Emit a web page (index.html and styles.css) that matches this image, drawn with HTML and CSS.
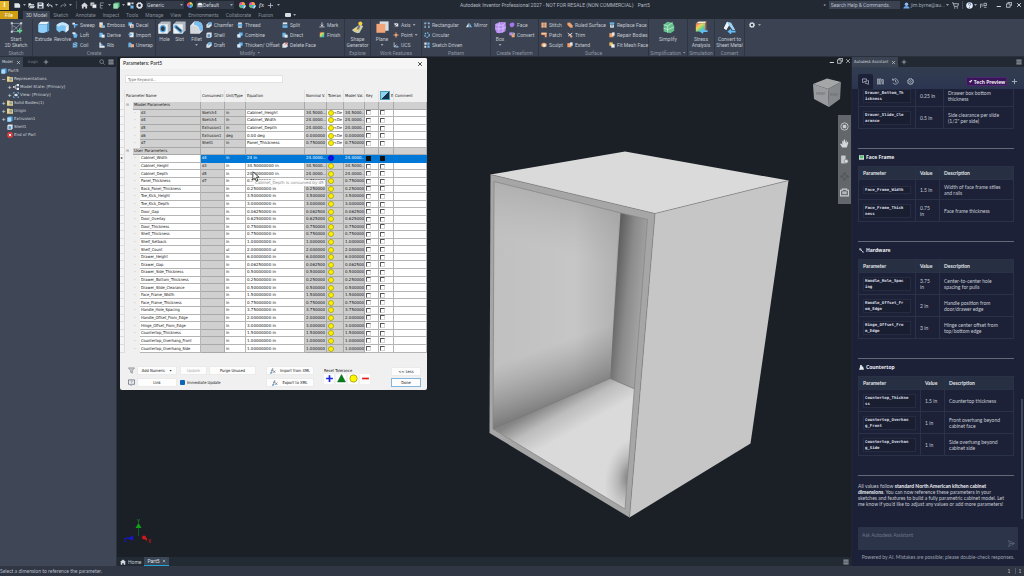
FILE: index.html
```html
<!DOCTYPE html>
<html lang="en">
<head>
<meta charset="utf-8">
<title>Autodesk Inventor Professional 2027 - Part5</title>
<link rel="stylesheet" href="styles.css">
</head>
<body>
<svg class="defs" aria-hidden="true">
  <defs>
    <linearGradient id="rainbow" x1="0" y1="0" x2="1" y2="1"><stop offset="0" stop-color="#f0605a"/><stop offset=".35" stop-color="#f4d35a"/><stop offset=".65" stop-color="#58d48c"/><stop offset="1" stop-color="#4a9ff0"/></linearGradient>
  </defs>
  <symbol id="new" viewBox="0 0 16 16"><path d="M1 3h10l3 3v7H1z" fill="#e3e6ea"/></symbol>
  <symbol id="open" viewBox="0 0 16 16"><path d="M1 3h5l2 2h6v3H4l-3 5z" fill="#e3e6ea"/><path d="M5 9h11l-3 5H2z" fill="#c4c9d0"/></symbol>
  <symbol id="save" viewBox="0 0 16 16"><path d="M1 1h12l2 2v12H1z" fill="#e3e6ea"/><path d="M4 3h7v3H4zM4 9h8v5H4z" fill="#4c5564"/></symbol>
  <symbol id="undo" viewBox="0 0 16 16"><path d="M3 7h7q4 0 4 5M6 3 2 7l4 4" fill="none" stroke="#e3e6ea" stroke-width="2.2"/></symbol>
  <symbol id="redo" viewBox="0 0 16 16"><path d="M13 7H6q-4 0-4 5M10 3l4 4-4 4" fill="none" stroke="#78808c" stroke-width="2.2"/></symbol>
  <symbol id="home" viewBox="0 0 16 16"><path d="M8 1 0 8h2v7h4v-4h4v4h4V8h2z" fill="#d5d9de"/></symbol>
  <symbol id="stack" viewBox="0 0 16 16"><path d="M1 1h9v8H1z" fill="#c8ccd2"/><path d="M5 5h10v9H5z" fill="#eceef0" stroke="#222933"/></symbol>
  <symbol id="select" viewBox="0 0 16 16"><path d="M3 2h8M3 2v12M3 8h6M3 14h5" stroke="#89919d" stroke-width="2" fill="none"/></symbol>
  <symbol id="cubeg" viewBox="0 0 16 16"><path d="M1 4 5 1h10v10l-4 4H1z" fill="#55b980"/><path d="M1 4h10v11H1z" fill="#9be0b5"/></symbol>
  <symbol id="link" viewBox="0 0 16 16"><path d="M1 1h7v7H1z" fill="#fff"/><path d="M8 8h7v7H8z" fill="#6bb9ee"/><path d="M10 1h5v4h-5z" fill="#ccd"/></symbol>
  <symbol id="gear" viewBox="0 0 16 16"><circle cx="8" cy="8" r="5" fill="none" stroke="#dfe2e6" stroke-width="3.5"/><circle cx="8" cy="8" r="7" fill="none" stroke="#dfe2e6" stroke-width="2" stroke-dasharray="2.8 2.7"/></symbol>
  <symbol id="gearline" viewBox="0 0 16 16"><circle cx="8" cy="8" r="6" fill="none" stroke="#b7bdc8" stroke-width="2"/><circle cx="8" cy="8" r="2" fill="none" stroke="#b7bdc8" stroke-width="1.5"/><circle cx="8" cy="8" r="7.3" fill="none" stroke="#b7bdc8" stroke-width="1.4" stroke-dasharray="2.9 2.8"/></symbol>
  <symbol id="wheel" viewBox="0 0 16 16"><path d="M8 8V0a8 8 0 0 1 7 4z" fill="#f4d35a"/><path d="M8 8l7-4a8 8 0 0 1 0 8z" fill="#6fd06a"/><path d="M8 8l7 4a8 8 0 0 1-7 4z" fill="#46b0f0"/><path d="M8 8v8a8 8 0 0 1-7-4z" fill="#5b6fe8"/><path d="M8 8l-7 4a8 8 0 0 1 0-8z" fill="#e25bb0"/><path d="M8 8 1 4a8 8 0 0 1 7-4z" fill="#f0653c"/></symbol>
  <symbol id="material" viewBox="0 0 16 16"><path d="M1 9a7 7 0 0 1 14 0z" fill="#f0f0f0"/><path d="M1 10h14v4H1z" fill="#aab0b8"/></symbol>
  <symbol id="plus" viewBox="0 0 16 16"><path d="M8 2v12M2 8h12" stroke="#aeb4bf" stroke-width="2"/></symbol>
  <symbol id="paint" viewBox="0 0 16 16"><circle cx="7" cy="7" r="7" fill="#e25bb0"/><path d="M7 7V0a7 7 0 0 1 7 7z" fill="#f4a53a"/><path d="M7 7h7a7 7 0 0 1-7 7z" fill="#46b0f0"/><path d="M7 7v7a7 7 0 0 1-7-7z" fill="#53c46c"/><path d="m9 15 5-8 2 2-4 6z" fill="#e9edf2"/></symbol>
  <symbol id="user" viewBox="0 0 16 16"><circle cx="8" cy="5" r="4" fill="#8cbcf5"/><path d="M1 15q0-6 7-6t7 6z" fill="#6aa5ee"/></symbol>
  <symbol id="cart" viewBox="0 0 16 16"><path d="M0 2h3l2 8h8l2-6H4" fill="none" stroke="#b9bfc8" stroke-width="2"/><circle cx="6" cy="13.500" r="1.500" fill="#b9bfc8"/><circle cx="12" cy="13.500" r="1.500" fill="#b9bfc8"/></symbol>
  <symbol id="help" viewBox="0 0 16 16"><circle cx="8" cy="8" r="7.500" fill="#e8edf5"/><path d="M5.500 6q0-3 2.500-3t2.500 2.500Q10.500 7 8 9M8 11v2" fill="none" stroke="#2e5fa8" stroke-width="2"/></symbol>
  <symbol id="share" viewBox="0 0 16 16"><path d="M1 14V5h5M9 3h6v5h-6zM9 12h6M3 9h5" stroke="#c0c5cd" stroke-width="1.800" fill="none"/></symbol>
  <symbol id="minimize" viewBox="0 0 16 16"><path d="M2 12h11" stroke="#e3e6ea" stroke-width="2.500"/></symbol>
  <symbol id="restore" viewBox="0 0 16 16"><path d="M5 4V1h10v8h-3M1 5h10v9H1z" fill="none" stroke="#e3e6ea" stroke-width="2"/></symbol>
  <symbol id="close" viewBox="0 0 16 16"><path d="m3 3 10 10M13 3 3 13" stroke="currentColor" stroke-width="2"/></symbol>
  <symbol id="menu" viewBox="0 0 16 16"><path d="M1 3h14M1 8h14M1 13h14" stroke="#cdd1d8" stroke-width="2.200"/></symbol>
  <symbol id="search" viewBox="0 0 16 16"><circle cx="7" cy="7" r="5" fill="none" stroke="#a8adb7" stroke-width="1.500"/><path d="m11 11 4 4" stroke="#a8adb7" stroke-width="1.500"/></symbol>
  <symbol id="sketch" viewBox="0 0 32 32"><path d="M5 6h22v20H5zM5 26 27 6M5 12q14 2 14 14" fill="none" stroke="#aab1bd" stroke-width="1.500"/><g fill="#cfd4db"><path d="M2 3h5v5H2zM25 3h5v5h-5zM2 24h5v5H2z"/></g><path d="M24 18v12M18 24h12" stroke="#5fd58f" stroke-width="3.500"/></symbol>
  <symbol id="extrude" viewBox="0 0 32 32"><path d="m3 8 6-6h21l-5 6z" fill="#e8f2fa"/><path d="M25 8l5-6v21l-5 6z" fill="#4f9fd8"/><path d="M3 8h22v18q-11 7-22 1z" fill="#8fcffa"/></symbol>
  <symbol id="revolve" viewBox="0 0 32 32"><path d="M1 10Q16-4 31 10v12l-7 6q-8-8-16 0l-7-6z" fill="#7cc4f2"/><path d="M1 10Q16-4 31 10l-6 4q-9-7-18 0z" fill="#c8e6fa"/><path d="m24 16 7-6v12l-7 6z" fill="#e8eef2"/></symbol>
  <symbol id="hole" viewBox="0 0 32 32"><path d="m1 8 7-7h23v22l-7 8H1z" fill="#b4b9c0"/><path d="M1 8h23v23H1z" fill="#eef0f2"/><ellipse cx="12" cy="19" rx="8" ry="9" fill="#5eb0e8"/><ellipse cx="12" cy="19" rx="5" ry="6" fill="#313a48"/></symbol>
  <symbol id="slot" viewBox="0 0 32 32"><path d="m1 8 7-7h23v22l-7 8H1z" fill="#b4b9c0"/><path d="M1 8h23v23H1z" fill="#eef0f2"/><path d="m7 14 12 11" stroke="#5eb0e8" stroke-width="9" stroke-linecap="round"/><path d="m8 15 11 9" stroke="#313a48" stroke-width="4" stroke-linecap="round"/></symbol>
  <symbol id="fillet" viewBox="0 0 32 32"><path d="M1 11 10 1h10q11 2 11 14v9l-7 7H1z" fill="#e9ebee"/><path d="M10 1h10q11 2 11 14v8l-7 3q0-15-14-17z" fill="#78bff0"/><path d="M1 11h8q15 2 15 20H1z" fill="#d4d7da"/></symbol>
  <symbol id="generator" viewBox="0 0 32 32"><path d="M2 22 22 8l8 5-9 16q-9 4-19-7z" fill="#c9cdb6"/><path d="m5 21 13-7 8 3-10 9z" fill="#e8d372"/><path d="m14 21 4-11 5 1-3 10z" fill="#6f7884"/><circle cx="23" cy="6" r="5" fill="#f6cf3f"/></symbol>
  <symbol id="plane" viewBox="0 0 32 32"><path d="M9 1h22v23H9z" fill="#d9dde2"/><path d="M1 7h22v22H1z" fill="#f2a578"/></symbol>
  <symbol id="box" viewBox="0 0 32 32"><path d="M4 7q8-6 24-4 3 10 0 22-10 7-22 4Q0 18 4 7z" fill="#b48bf0"/><path d="M3 9q10 3 19 1M22 10q2 10-1 18M22 10l7-6M12 10v19M3 19q11 3 26-3M14 3l-2 7" fill="none" stroke="#e2d2ff" stroke-width="1.500"/></symbol>
  <symbol id="simplify" viewBox="0 0 32 32"><path d="m4 9 9-7 13 2 4 9v11l-9 6-17-4z" fill="#63bf8b"/><path d="m4 9 10 3 12-8M14 12v17M4 18l11 3 14-6" stroke="#c4eed4" stroke-width="2" fill="none"/></symbol>
  <symbol id="stress" viewBox="0 0 32 32"><path d="m2 6 7-5h19l-3 5z" fill="#f6eecb"/><path d="M2 6h23v20H2z" fill="url(#rainbow)"/><path d="m25 6 3-5v20l-3 5z" fill="#d35c57"/><path d="M14 25h17M20 20l-6 5 6 5" stroke="#61bdf4" stroke-width="4" fill="none"/></symbol>
  <symbol id="metal" viewBox="0 0 32 32"><path d="m2 18 8-16 10 2 10 18-6 1-9-12-7 11z" fill="#9ed2f5"/><path d="m2 18 8-16 4 9-6 11z" fill="#f0f4f7"/><path d="M14 26h17M20 21l-6 5 6 5" stroke="#61bdf4" stroke-width="4" fill="none"/></symbol>
  <symbol id="s-sweep" viewBox="0 0 16 16"><path d="M1 2h7v5H1z" fill="#e6eef5"/><path d="M5 5h10v4H9v6H5z" fill="#6bb8ec"/></symbol>
  <symbol id="s-loft" viewBox="0 0 16 16"><path d="M2 2h7l6 5-3 8H5z" fill="#6bb8ec"/><path d="M1 1h8v4H1z" fill="#eef3f7"/></symbol>
  <symbol id="s-coil" viewBox="0 0 16 16"><path d="M2 4q12-4 12 0L2 8q12-2 12 1L2 13h12" fill="none" stroke="#7cc4f2" stroke-width="2.500"/></symbol>
  <symbol id="s-emboss" viewBox="0 0 16 16"><path d="M1 1h9v13H1z" fill="#e6e9ec"/><path d="m4 6 11 5v4H4z" fill="#f0bd78"/><path d="M9 9h7v6H9z" fill="#6bb8ec"/></symbol>
  <symbol id="s-derive" viewBox="0 0 16 16"><path d="M1 2h9v12H1z" fill="#6bb8ec"/><path d="M7 7h8v8H7z" fill="#e8ebee"/></symbol>
  <symbol id="s-rib" viewBox="0 0 16 16"><path d="M1 1h4v9h10v5H1z" fill="#e3e6ea"/><path d="m5 3 8 7H5z" fill="#6bb8ec"/></symbol>
  <symbol id="s-decal" viewBox="0 0 16 16"><path d="M1 1h10v9H1z" fill="#6bb8ec"/><path d="M5 6h10v9H5z" fill="#e6e9ec"/><circle cx="10" cy="11" r="2.500" fill="#cf6e60"/></symbol>
  <symbol id="s-import" viewBox="0 0 16 16"><path d="M4 1h11v13H4z" fill="#e6e9ec"/><path d="M0 7h9M6 4l3 3-3 3" fill="none" stroke="#4fa8e8" stroke-width="2.500"/></symbol>
  <symbol id="s-unwrap" viewBox="0 0 16 16"><path d="M1 2q9-3 9 4v8H1z" fill="#6bb8ec"/><path d="M8 6h8v8H8z" fill="#f0a878"/></symbol>
  <symbol id="s-chamfer" viewBox="0 0 16 16"><path d="M1 7 7 1h8v8l-6 6H1z" fill="#dfe3e7"/><path d="m7 1 8 0v3L4 11z" fill="#5faee6"/></symbol>
  <symbol id="s-shell" viewBox="0 0 16 16"><path d="m1 4 3-3h11v11l-3 3H1z" fill="#e2e5e9"/><path d="M4 6h7v7H4z" fill="#4d92c8"/></symbol>
  <symbol id="s-thread" viewBox="0 0 16 16"><path d="M3 1h10v4H3zM3 11h10v4H3z" fill="#dfe3e7"/><path d="M2 5h12v6H2z" fill="#5faee6"/></symbol>
  <symbol id="s-combine" viewBox="0 0 16 16"><path d="M5 1h10v9h-5v5H1V6h4z" fill="#6bb8ec"/><path d="M1 6h8v8H1z" fill="#e2e8ee"/></symbol>
  <symbol id="s-split" viewBox="0 0 16 16"><path d="M2 1h12v5H2z" fill="#e2e5e9"/><path d="M2 9h12v6H2zM0 7h15" fill="#6bb8ec" stroke="#6bb8ec"/></symbol>
  <symbol id="s-delete" viewBox="0 0 16 16"><path d="m1 6 5-4h9v9l-4 4H1z" fill="#dfe3e7"/><path d="m8 1 6 6M14 1 8 7" stroke="#e25c50" stroke-width="2.500"/></symbol>
  <symbol id="s-mark" viewBox="0 0 16 16"><path d="M8 1v9M5 7l3 4 3-4M1 13h14" stroke="#e3e6ea" stroke-width="2" fill="none"/></symbol>
  <symbol id="s-finish" viewBox="0 0 16 16"><path d="M2 1h12v13H2z" fill="url(#rainbow)"/></symbol>
  <symbol id="s-axis" viewBox="0 0 16 16"><path d="M3 3h11v9H6z" fill="#e2e5e9"/><path d="M1 15 12 4" stroke="#5a6371" stroke-width="2"/></symbol>
  <symbol id="s-point" viewBox="0 0 16 16"><path d="M8 0v16M0 8h16" stroke="#d8a088" stroke-width="1.500"/><circle cx="8" cy="8" r="4" fill="#f2a36b"/></symbol>
  <symbol id="s-ucs" viewBox="0 0 16 16"><path d="M3 1v12h12M3 13l6-6" stroke="#cfd4db" stroke-width="2" fill="none"/><path d="M9 10h4v4H9z" fill="#6bb8ec"/></symbol>
  <symbol id="s-rect" viewBox="0 0 16 16"><g fill="#8dc8f0"><path d="M1 1h4v4H1zM11 1h4v4h-4zM1 11h4v4H1zM11 11h4v4h-4z"/></g><path d="M6 3h4M3 6v4M13 6v4" stroke="#dfe3e7"/></symbol>
  <symbol id="s-circ" viewBox="0 0 16 16"><circle cx="8" cy="8" r="6" fill="none" stroke="#7cc4f2" stroke-width="3" stroke-dasharray="4 2.300"/></symbol>
  <symbol id="s-driven" viewBox="0 0 16 16"><path d="M1 1h6v6H1zM1 10h5v5H1z" fill="#e2e5e9"/><path d="M9 1h6v6H9zM9 9h6v6H9z" fill="#6bb8ec"/></symbol>
  <symbol id="s-mirror" viewBox="0 0 16 16"><path d="M7 2v12H0z" fill="#e3e6ea"/><path d="M9 2v12h7z" fill="#6bb8ec"/></symbol>
  <symbol id="s-face" viewBox="0 0 16 16"><path d="M1 6q5-7 12-4 4 8-3 11-6 4-9-7z" fill="#a974f0"/></symbol>
  <symbol id="s-convert" viewBox="0 0 16 16"><path d="M1 1h8v8H1z" fill="#b890f2"/><path d="M7 6h8v8H7z" fill="#f0a878"/><path d="M9 3h5v4" stroke="#fff" fill="none" stroke-width="2"/></symbol>
  <symbol id="s-orange" viewBox="0 0 16 16"><path d="M1 2h14v12h-5V8H1z" fill="#f2a36b"/><path d="M1 2h14v3H1z" fill="#f8caa6"/></symbol>
  <symbol id="s-stitch" viewBox="0 0 16 16"><path d="M1 1h6v14H1zM9 1h6v14H9z" fill="#f2a36b"/><path d="M4 4h8M4 8h8M4 12h8" stroke="#e8ebee"/></symbol>
  <symbol id="s-sculpt" viewBox="0 0 16 16"><path d="M1 5q7-6 14 0v6q-7 6-14 0z" fill="#f2a36b"/><circle cx="9" cy="9" r="3.500" fill="#e5eef5"/></symbol>
  <symbol id="s-ruled" viewBox="0 0 16 16"><path d="m1 2 7-1 7 8v6H9L1 8z" fill="#f2a36b"/></symbol>
  <symbol id="s-trim" viewBox="0 0 16 16"><path d="m2 3 12 9M3 11 14 3" stroke="#e3e6ea" stroke-width="2.500"/><circle cx="11" cy="12" r="3" fill="#f2a36b"/></symbol>
  <symbol id="s-replace" viewBox="0 0 16 16"><path d="M2 1h12v5H2z" fill="#6bb8ec"/><path d="M3 7h10v8H3z" fill="#e2e5e9"/><path d="M6 4h4v8H6z" fill="#5597c9"/></symbol>
  <symbol id="s-repair" viewBox="0 0 16 16"><path d="M1 3h11v11H1z" fill="#f2a36b"/><path d="M8 1h7v9H8z" fill="#e2e5e9"/></symbol>
  <symbol id="s-mesh" viewBox="0 0 16 16"><path d="M1 1h9v9H1z" fill="#f0c35c"/><path d="M6 6h9v9H6z" fill="#eceef0"/></symbol>
  <symbol id="folder" viewBox="0 0 16 16"><path d="M0 1h6l2 2h8v12H0z" fill="#e9d28b"/><path d="M6 6h8v6H6z" fill="#8a9c9f"/></symbol>
  <symbol id="part" viewBox="0 0 16 16"><path d="m1 4 4-3h10v10l-4 4H1z" fill="#4f9fd8"/><path d="M1 4h10v11H1z" fill="#a8dafb"/></symbol>
  <symbol id="states" viewBox="0 0 16 16"><path d="M0 8h7M7 3v10h3M7 3h3" stroke="#e3e6ea" fill="none" stroke-width="1.500"/><path d="M10 0h6v6h-6zM10 10h6v6h-6zM0 6h4v4H0z" fill="#e3e6ea"/></symbol>
  <symbol id="view" viewBox="0 0 16 16"><path d="M1 5V1h4M11 1h4v4M15 11v4h-4M5 15H1v-4" fill="none" stroke="#6bb8ec" stroke-width="2"/><path d="M4 5h8v6H4z" fill="#cfe2f0"/></symbol>
  <symbol id="stop" viewBox="0 0 16 16"><circle cx="8" cy="8" r="8" fill="#d93636"/><path d="m5 5 6 6M11 5l-6 6" stroke="#fff" stroke-width="2.500"/></symbol>
  <symbol id="funnel" viewBox="0 0 16 16"><path d="M1 2h14L10 8v6l-4-2V8z" fill="#c9cbce" stroke="#85888d" stroke-width="1.600"/></symbol>
  <symbol id="tip" viewBox="0 0 16 16"><path d="M1 2h14v10H9l-2 3-2-3H1z" fill="none" stroke="#52606e" stroke-width="1.600"/><path d="M6 5h4L8 8v2" stroke="#52606e" fill="none"/></symbol>
  <symbol id="fx" viewBox="0 0 16 16"><path d="M9 2Q6 0 5.500 5L4 13q-1 2-3 1M3 6h6M9 7l5 6M14 7l-6 6" fill="none" stroke="#4b5865" stroke-width="1.600"/><path d="M0 13h6" stroke="#2b8fd8" stroke-width="2"/></symbol>
  <symbol id="chat" viewBox="0 0 16 16"><path d="M1 2h9v6H5L2 11V8H1zM12 6h3v6h-1v3l-3-3H7v-2" fill="none" stroke="#c9cedb" stroke-width="1.500"/></symbol>
  <symbol id="books" viewBox="0 0 16 16"><path d="M1 2h3v12H1zM6 2h3v12H6zM11 4l3-1 2 10-3 1z" fill="none" stroke="#b7bdc8" stroke-width="1.700"/></symbol>
  <symbol id="history" viewBox="0 0 16 16"><path d="M2 4q7-6 11 1t-4 9q-5 1-7-3M1 1v4h4M8 4v5h3" fill="none" stroke="#b7bdc8" stroke-width="1.600"/></symbol>
  <symbol id="spark" viewBox="0 0 16 16"><path d="m2 8 12-6-2 6H9l-3 7v-6z" fill="#fff"/></symbol>
  <symbol id="send" viewBox="0 0 16 16"><path d="m1 1 14 7-14 7 3-7zM4 8h10" fill="none" stroke="#626b80" stroke-width="1.500"/></symbol>
  <symbol id="frame" viewBox="0 0 16 16"><path d="M0 1h16v14H0z" fill="#e8f0ea"/><path d="M2 3h12v8H2z" fill="#4fbf6a"/></symbol>
  <symbol id="wrench" viewBox="0 0 16 16"><path d="m4 4 9 9" stroke="#d6d8dd" stroke-width="3"/><circle cx="4" cy="4" r="3" fill="none" stroke="#d6d8dd" stroke-width="2"/><circle cx="13" cy="13" r="2" fill="#d6d8dd"/></symbol>
  <symbol id="counter" viewBox="0 0 16 16"><path d="M4 0h5v5h4l3 10H0l3-8z" fill="#e8e9ed"/></symbol>
  <symbol id="orb" viewBox="0 0 16 16"><circle cx="8" cy="8" r="6.500" fill="none" stroke="#c8cacd" stroke-width="1.500"/><path d="M5 5h6v6H5z" fill="#c8cacd"/></symbol>
  <symbol id="hand" viewBox="0 0 16 16"><path d="M4 15 0 9l2-1 2 2V3h2v4l1-6h2v6l2-5 1 1-1 5 2-3 2 1-3 9z" fill="#d4d6d8"/></symbol>
  <symbol id="zoomdoc" viewBox="0 0 16 16"><path d="M2 1h8v14H2z" fill="#c8cacd"/><circle cx="11" cy="11" r="3.500" fill="#d9dadc" stroke="#6b7075"/></symbol>
  <symbol id="orbit" viewBox="0 0 16 16"><path d="m8 0 3 3H5zM8 16l3-3H5zM0 8l3-3v6zM16 8l-3-3v6z" fill="#4e5358"/><circle cx="8" cy="8" r="3.500" fill="none" stroke="#4e5358" stroke-width="1.500"/></symbol>
  <symbol id="camera" viewBox="0 0 16 16"><path d="M1 4h3V2h8v2h3v10H1z" fill="none" stroke="#cfd1d4" stroke-width="1.800"/><path d="M4 6h8v5H4z" fill="#b5b8bb"/></symbol>
</svg>

<header class="titlebar">
  <span class="logo">I</span>
  <nav class="quick" aria-label="Quick access">
    <button aria-label="New"><svg><use href="#new"/></svg></button><i class="caret"></i>
    <button aria-label="Open"><svg><use href="#open"/></svg></button>
    <button aria-label="Save"><svg><use href="#save"/></svg></button>
    <button aria-label="Undo"><svg><use href="#undo"/></svg></button><i class="caret"></i>
    <button aria-label="Redo"><svg><use href="#redo"/></svg></button><i class="caret"></i>
    <i class="sep"></i>
    <button aria-label="Home"><svg><use href="#home"/></svg></button>
    <button aria-label="Projects"><svg><use href="#stack"/></svg></button>
    <button aria-label="Select"><svg><use href="#select"/></svg></button><i class="caret"></i>
    <button aria-label="Update"><svg><use href="#cubeg"/></svg></button><i class="caret"></i>
    <button aria-label="Links"><svg><use href="#link"/></svg></button>
    <button aria-label="Settings"><svg><use href="#gear"/></svg></button>
  </nav>
  <span class="pick"><select aria-label="Material"><option>Generic</option></select><i class="caret"></i></span>
  <svg class="ic"><use href="#wheel"/></svg>
  <span class="pick"><svg class="ic"><use href="#material"/></svg><select aria-label="Appearance"><option>Default</option></select><i class="caret"></i></span>
  <nav class="quick after" aria-label="Appearance tools">
    <button aria-label="Adjust"><svg><use href="#paint"/></svg></button>
    <button aria-label="Clear"><svg><use href="#paint"/></svg></button>
    <button aria-label="Parameters" class="fxb">fx</button>
    <button aria-label="Add"><svg><use href="#plus"/></svg></button>
    <i class="caret"></i>
  </nav>
  <h1>Autodesk Inventor Professional 2027 - NOT FOR RESALE (NON COMMERCIAL) <span>Part5</span></h1>
  <div class="account">
    <span class="tri">▸</span>
    <input type="search" aria-label="Search" placeholder="Search Help &amp; Commands...">
    <button><svg><use href="#user"/></svg>jim.byrne@au...<i class="caret"></i></button>
    <button aria-label="Cart"><svg><use href="#cart"/></svg></button>
    <i class="sep"></i>
    <button aria-label="Help"><svg><use href="#help"/></svg><i class="caret"></i></button>
    <button aria-label="Share"><svg><use href="#share"/></svg></button>
  </div>
  <div class="winbtns">
    <button aria-label="Minimize"><svg><use href="#minimize"/></svg></button>
    <button aria-label="Restore"><svg><use href="#restore"/></svg></button>
    <button aria-label="Close"><svg><use href="#close"/></svg></button>
  </div>
</header>

<nav class="menu" aria-label="Ribbon tabs">
  <a class="file" href="#">File</a><a class="on" href="#">3D Model</a><a href="#">Sketch</a><a href="#">Annotate</a><a href="#">Inspect</a><a href="#">Tools</a><a href="#">Manage</a><a href="#">View</a><a href="#">Environments</a><a href="#">Collaborate</a><a href="#">Fusion</a>
  <button aria-label="Ribbon display"><span class="pill"></span><i class="caret"></i></button>
</nav>

<section class="ribbon" aria-label="Ribbon">
  <div class="group g-sketch">
    <div class="tools"><button class="big"><svg><use href="#sketch"/></svg><span>Start<br>2D Sketch</span></button></div>
    <div class="cap">Sketch</div>
  </div>
  <div class="group g-create">
    <div class="tools">
      <button class="big"><svg><use href="#extrude"/></svg><span>Extrude</span></button>
      <button class="big"><svg><use href="#revolve"/></svg><span>Revolve</span></button>
      <div class="col"><button><svg><use href="#s-sweep"/></svg>Sweep</button><button><svg><use href="#s-loft"/></svg>Loft</button><button><svg><use href="#s-coil"/></svg>Coil</button></div>
      <div class="col"><button><svg><use href="#s-emboss"/></svg>Emboss</button><button><svg><use href="#s-derive"/></svg>Derive</button><button><svg><use href="#s-rib"/></svg>Rib</button></div>
      <div class="col"><button><svg><use href="#s-decal"/></svg>Decal</button><button><svg><use href="#s-import"/></svg>Import</button><button><svg><use href="#s-unwrap"/></svg>Unwrap</button></div>
    </div>
    <div class="cap">Create</div>
  </div>
  <div class="group g-modify">
    <div class="tools">
      <button class="big"><svg><use href="#hole"/></svg><span>Hole</span></button>
      <button class="big"><svg><use href="#slot"/></svg><span>Slot</span></button>
      <button class="big"><svg><use href="#fillet"/></svg><span>Fillet</span><i class="caret"></i></button>
      <div class="col"><button><svg><use href="#s-chamfer"/></svg>Chamfer</button><button><svg><use href="#s-shell"/></svg>Shell</button><button><svg><use href="#s-chamfer"/></svg>Draft</button></div>
      <div class="col"><button><svg><use href="#s-thread"/></svg>Thread</button><button><svg><use href="#s-combine"/></svg>Combine</button><button><svg><use href="#s-combine"/></svg>Thicken/ Offset</button></div>
      <div class="col"><button><svg><use href="#s-split"/></svg>Split</button><button><svg><use href="#s-derive"/></svg>Direct</button><button><svg><use href="#s-delete"/></svg>Delete Face</button></div>
      <div class="col"><button><svg><use href="#s-mark"/></svg>Mark</button><button><svg><use href="#s-finish"/></svg>Finish</button></div>
    </div>
    <div class="cap">Modify <i class="caret"></i></div>
  </div>
  <div class="group g-explore">
    <div class="tools"><button class="big"><svg><use href="#generator"/></svg><span>Shape<br>Generator</span></button></div>
    <div class="cap">Explore</div>
  </div>
  <div class="group g-work">
    <div class="tools">
      <button class="big"><svg><use href="#plane"/></svg><span>Plane</span><i class="caret"></i></button>
      <div class="col"><button><svg><use href="#s-axis"/></svg>Axis <i class="caret"></i></button><button><svg><use href="#s-point"/></svg>Point <i class="caret"></i></button><button><svg><use href="#s-ucs"/></svg>UCS</button></div>
    </div>
    <div class="cap">Work Features</div>
  </div>
  <div class="group g-pattern">
    <div class="tools">
      <div class="col"><button><svg><use href="#s-rect"/></svg>Rectangular</button><button><svg><use href="#s-circ"/></svg>Circular</button><button><svg><use href="#s-driven"/></svg>Sketch Driven</button></div>
      <div class="col"><button><svg><use href="#s-mirror"/></svg>Mirror</button></div>
    </div>
    <div class="cap">Pattern</div>
  </div>
  <div class="group g-free">
    <div class="tools">
      <button class="big"><svg><use href="#box"/></svg><span>Box</span><i class="caret"></i></button>
      <div class="col"><button><svg><use href="#s-face"/></svg>Face</button><button><svg><use href="#s-convert"/></svg>Convert</button></div>
    </div>
    <div class="cap">Create Freeform</div>
  </div>
  <div class="group g-surface">
    <div class="tools">
      <div class="col"><button><svg><use href="#s-stitch"/></svg>Stitch</button><button><svg><use href="#s-orange"/></svg>Patch</button><button><svg><use href="#s-sculpt"/></svg>Sculpt</button></div>
      <div class="col"><button><svg><use href="#s-ruled"/></svg>Ruled Surface</button><button><svg><use href="#s-trim"/></svg>Trim</button><button><svg><use href="#s-repair"/></svg>Extend</button></div>
      <div class="col"><button><svg><use href="#s-replace"/></svg>Replace Face</button><button><svg><use href="#s-repair"/></svg>Repair Bodies</button><button><svg><use href="#s-mesh"/></svg>Fit Mesh Face</button></div>
    </div>
    <div class="cap">Surface</div>
  </div>
  <div class="group g-simplify">
    <div class="tools"><button class="big"><svg><use href="#simplify"/></svg><span>Simplify</span></button></div>
    <div class="cap">Simplification <i class="caret"></i></div>
  </div>
  <div class="group g-stress">
    <div class="tools"><button class="big"><svg><use href="#stress"/></svg><span>Stress<br>Analysis</span></button></div>
    <div class="cap">Simulation</div>
  </div>
  <div class="group g-convert">
    <div class="tools"><button class="big"><svg><use href="#metal"/></svg><span>Convert to<br>Sheet Metal</span></button></div>
    <div class="cap">Convert</div>
  </div>
  <button class="ribbon-gear" aria-label="Ribbon settings"><svg class="ic"><use href="#gear"/></svg><i class="caret"></i></button>
</section>

<main class="work">
  <aside class="browser">
    <div class="strip">
      <a class="tab on" href="#">Model <svg><use href="#close"/></svg></a>
      <a class="tab dim" href="#">iLogic</a>
      <button aria-label="Add tab"><svg class="ic"><use href="#plus"/></svg></button>
      <button class="end" aria-label="Search"><svg class="ic"><use href="#search"/></svg></button>
      <button aria-label="Menu"><svg class="ic"><use href="#menu"/></svg></button>
    </div>
    <ul class="tree">
      <li class="root"><svg><use href="#part"/></svg>Part5</li>
      <li><b>−</b><svg><use href="#folder"/></svg>Representations</li>
      <li class="sub"><b>+</b><svg><use href="#states"/></svg>Model State: [Primary]</li>
      <li class="sub"><b>+</b><svg><use href="#view"/></svg>View: [Primary]</li>
      <li><b>+</b><svg><use href="#folder"/></svg>Solid Bodies(1)</li>
      <li><b>+</b><svg><use href="#folder"/></svg>Origin</li>
      <li><b>+</b><svg><use href="#part"/></svg>Extrusion1</li>
      <li><b></b><svg><use href="#s-shell"/></svg>Shell1</li>
      <li><b></b><svg><use href="#stop"/></svg>End of Part</li>
    </ul>
  </aside>

  <section class="stage">
    <div class="viewport">
      <svg class="scene" viewBox="117 57 734 500" role="img" aria-label="Cabinet model">
        <defs>
          <linearGradient id="wall" x1="0" y1="0" x2="1" y2="0"><stop offset="0" stop-color="#c0c0c0"/><stop offset=".65" stop-color="#c6c6c6"/><stop offset="1" stop-color="#b0b0b0"/></linearGradient>
          <linearGradient id="wallLow" gradientUnits="userSpaceOnUse" x1="532" y1="352" x2="552" y2="408"><stop offset="0" stop-color="#888" stop-opacity="0"/><stop offset="1" stop-color="#686868" stop-opacity=".8"/></linearGradient>
          <linearGradient id="wallTop" gradientUnits="userSpaceOnUse" x1="550" y1="190" x2="535" y2="245"><stop offset="0" stop-color="#999" stop-opacity=".5"/><stop offset="1" stop-color="#aaa" stop-opacity="0"/></linearGradient>
          <linearGradient id="back" gradientUnits="userSpaceOnUse" x1="614" y1="290" x2="642" y2="293"><stop offset="0" stop-color="#606060"/><stop offset=".5" stop-color="#8b8b8b"/><stop offset="1" stop-color="#a2a2a2"/></linearGradient>
          <linearGradient id="floor" gradientUnits="userSpaceOnUse" x1="550" y1="402" x2="568" y2="434"><stop offset="0" stop-color="#858585"/><stop offset=".45" stop-color="#bdbdbd"/><stop offset="1" stop-color="#dadada"/></linearGradient>
          <radialGradient id="spot" gradientUnits="userSpaceOnUse" cx="0" cy="0" r="1" gradientTransform="translate(631 477) rotate(12) scale(26 40)"><stop offset="0" stop-color="#555" stop-opacity=".8"/><stop offset=".5" stop-color="#777" stop-opacity=".35"/><stop offset="1" stop-color="#999" stop-opacity="0"/></radialGradient>
          <clipPath id="opening"><path d="M494 181.500 647.500 219.500 625 509 493 429z"/></clipPath>
        </defs>
        <path d="M490.500 174.500 625 151.500 788.500 180.500 655 213.500z" fill="#dadada"/>
        <path d="M655 213.500 788.500 180.500 750.500 443.500 629.500 517.500z" fill="#c6c6c6"/>
        <path d="M490.500 174.500 655 213.500 629.500 517.500 489.500 433z" fill="#a6a6a6"/>
        <g clip-path="url(#opening)">
          <path d="M490 175h131L610 378.500 490 431z" fill="url(#wall)"/>
          <path d="M490 175h131L610 378.500 490 431z" fill="url(#wallLow)"/>
          <path d="M490 175h131L610 378.500 490 431z" fill="url(#wallTop)"/>
          <path d="M621 205 650 213 634 389 610 378.500z" fill="url(#back)"/>
          <path d="M610 378.500 636 389.500 628 512 488 431z" fill="url(#floor)"/>
          <path d="M610 378.500 636 389.500 628 512 488 431z" fill="url(#spot)"/>
          <path d="M610 378.500 492 429.500M610 378.500 636 389.500" stroke="#777" stroke-width=".7"/>
        </g>
        <path d="M494 181.500 647.500 219.500 625 509 493 429z" fill="none" stroke="#868686" stroke-width=".8"/>
        <path d="M490.500 174.500 655 213.500 788.500 180.500M655 213.500 629.500 517.500" fill="none" stroke="#888" stroke-width=".7"/>
        <g class="cube">
          <path d="M813 84 827 78.500 841 82 828 89z" fill="#a4a6a8"/>
          <path d="M813 84 828 89 829 107 814 99z" fill="#999b9e"/>
          <path d="M828 89 841 82 840 99 829 107z" fill="#85888b"/>
          <text x="816" y="95">FRONT</text><text x="830" y="96">RIGHT</text>
        </g>
        <g class="triad">
          <path d="M138.500 536V525" stroke="#0b6b20" stroke-width=".8"/>
          <path d="m138.500 523-3 5h6z" fill="#12a01c"/>
          <path d="m128 538.500 5-3v5z" fill="#1616d8"/><path d="M126 538h4" stroke="#1616d8"/>
          <path d="m147 541-5-4q4 0 5 1z" fill="#d01818"/><circle cx="144" cy="537.500" r="2" fill="#d01818"/>
          <text x="137" y="523" fill="#12a01c">Y</text><text x="148" y="543" fill="#d01818">X</text><text x="124" y="542" fill="#1616d8">Z</text>
        </g>
      </svg>
      <div class="docbtns">
        <button aria-label="Minimize document"><svg class="ic"><use href="#minimize"/></svg></button>
        <button aria-label="Restore document"><svg class="ic"><use href="#restore"/></svg></button>
        <button aria-label="Close document"><svg class="ic"><use href="#close"/></svg></button>
      </div>
      <div class="navbar" role="toolbar" aria-label="Navigation">
        <button aria-label="Wheel"><svg><use href="#orb"/></svg></button>
        <button aria-label="Pan"><svg><use href="#hand"/></svg></button>
        <button aria-label="Zoom"><svg><use href="#zoomdoc"/></svg></button>
        <button aria-label="Orbit"><svg><use href="#orbit"/></svg></button>
        <button aria-label="Look at"><svg><use href="#camera"/></svg></button>
      </div>

      <div class="dialog" role="dialog" aria-labelledby="dlg-title">
        <div class="dlg-head"><h2 id="dlg-title">Parameters: Part5</h2><button aria-label="Close dialog"><svg class="ic"><use href="#close"/></svg></button></div>
        <input class="filter" type="text" aria-label="Keyword" placeholder="Type Keyword...">
        <table class="params">
          <colgroup><col class="c-row"><col class="c-tree"><col class="c-ind"><col class="c-name"><col class="c-used"><col class="c-unit"><col class="c-eq"><col class="c-nom"><col class="c-tol"><col class="c-mod"><col class="c-key"><col class="c-exp"><col></colgroup>
          <thead><tr><th></th><th colspan="3">Parameter Name</th><th>Consumed I</th><th>Unit/Type</th><th>Equation</th><th>Nominal V.</th><th>Toleran</th><th>Model Val.</th><th>Key</th><th><span class="exp"></span>E</th><th>Comment</th></tr></thead>
          <tbody id="rows"></tbody>
        </table>
        <div class="dlg-foot">
          <div class="pair icons"><button class="bare" aria-label="Filter"><svg><use href="#funnel"/></svg></button><button class="bare" aria-label="Tips"><svg><use href="#tip"/></svg></button></div>
          <div class="pair add"><button>Add Numeric<i class="caret"></i></button><button>Link</button></div>
          <div class="mid">
            <div class="line"><button class="upd" disabled>Update</button><button class="purge">Purge Unused</button></div>
            <label class="line"><input type="checkbox" checked>Immediate Update</label>
          </div>
          <div class="pair xml"><button><svg><use href="#fx"/></svg>Import from XML</button><button><svg><use href="#fx"/></svg>Export to XML</button></div>
          <fieldset class="tol">
            <legend>Reset Tolerance</legend>
            <div class="line">
              <button aria-label="Upper"><svg viewBox="0 0 16 16"><path d="M8 2v12M2 8h12" stroke="#1a25e6" stroke-width="3"/></svg></button>
              <button aria-label="Median"><svg viewBox="0 0 16 16"><path d="m8 1 7 13H1z" fill="#0c7d14" stroke="#063"/></svg></button>
              <button aria-label="Nominal"><svg viewBox="0 0 16 16"><circle cx="8" cy="8" r="6.500" fill="#fff700" stroke="#77750c"/></svg></button>
              <button aria-label="Lower"><svg viewBox="0 0 16 16"><path d="M2 8h12" stroke="#e81818" stroke-width="3"/></svg></button>
            </div>
          </fieldset>
          <div class="pair ok"><button>&lt;&lt; Less</button><button class="done">Done</button></div>
        </div>
        <div class="hint">Cabinet_Depth is consumed by d5</div>
        <svg class="cursor" viewBox="0 0 10 14"><path d="M1 1v10l2.500-2.500L5.500 13l2-1-2-4H9z" fill="#fff" stroke="#222"/></svg>
      </div>
    </div>
    <nav class="docs" aria-label="Documents">
      <a href="#"><svg class="ic"><use href="#home"/></svg>Home</a>
      <a class="on" href="#">Part5 <svg><use href="#close"/></svg></a>
      <button aria-label="Documents menu"><svg class="ic"><use href="#menu"/></svg></button>
    </nav>
  </section>

  <aside class="assistant">
    <div class="strip">
      <a class="tab on" href="#">Autodesk Assistant <svg><use href="#close"/></svg></a>
      <button aria-label="Add tab"><svg class="ic"><use href="#plus"/></svg></button>
      <button class="end" aria-label="Menu"><svg class="ic"><use href="#menu"/></svg></button>
    </div>
    <div class="a-head">
      <button class="on" aria-label="Chat"><svg><use href="#chat"/></svg></button>
      <button aria-label="Library"><svg><use href="#books"/></svg></button>
      <button aria-label="History"><svg><use href="#history"/></svg></button>
      <button aria-label="Settings"><svg><use href="#gearline"/></svg></button>
      <button class="preview"><svg><use href="#spark"/></svg>Tech Preview</button>
      <button class="add" aria-label="New chat"><svg><use href="#plus"/></svg></button>
    </div>
    <div class="a-body">
      <table class="spec first">
        <tbody>
          <tr><td><code>Drawer_Bottom_Th<br>ickness</code></td><td>0.25 in</td><td>Drawer box bottom<br>thickness</td></tr>
          <tr><td><code>Drawer_Slide_Cle<br>arance</code></td><td>0.5 in</td><td>Side clearance per slide<br>(1/2" per side)</td></tr>
        </tbody>
      </table>
      <hr>
      <h3><svg><use href="#frame"/></svg>Face Frame</h3>
      <table class="spec">
        <thead><tr><th>Parameter</th><th>Value</th><th>Description</th></tr></thead>
        <tbody>
          <tr class="short"><td><code>Face_Frame_Width</code></td><td>1.5 in</td><td>Width of face frame stiles<br>and rails</td></tr>
          <tr><td><code>Face_Frame_Thick<br>ness</code></td><td>0.75<br>in</td><td>Face frame thickness</td></tr>
        </tbody>
      </table>
      <hr>
      <h3><svg><use href="#wrench"/></svg>Hardware</h3>
      <table class="spec">
        <thead><tr><th>Parameter</th><th>Value</th><th>Description</th></tr></thead>
        <tbody>
          <tr><td><code>Handle_Hole_Spac<br>ing</code></td><td>3.75<br>in</td><td>Center-to-center hole<br>spacing for pulls</td></tr>
          <tr><td><code>Handle_Offset_Fr<br>om_Edge</code></td><td>2 in</td><td>Handle position from<br>door/drawer edge</td></tr>
          <tr><td><code>Hinge_Offset_Fro<br>m_Edge</code></td><td>3 in</td><td>Hinge center offset from<br>top/bottom edge</td></tr>
        </tbody>
      </table>
      <hr>
      <h3><svg><use href="#counter"/></svg>Countertop</h3>
      <table class="spec wide">
        <thead><tr><th>Parameter</th><th>Value</th><th>Description</th></tr></thead>
        <tbody>
          <tr><td><code>Countertop_Thickne<br>ss</code></td><td>1.5 in</td><td>Countertop thickness</td></tr>
          <tr><td><code>Countertop_Overhan<br>g_Front</code></td><td>1 in</td><td>Front overhang beyond<br>cabinet face</td></tr>
          <tr><td><code>Countertop_Overhan<br>g_Side</code></td><td>1 in</td><td>Side overhang beyond<br>cabinet side</td></tr>
        </tbody>
      </table>
      <hr>
      <p>All values follow <strong>standard North American kitchen cabinet<br>dimensions</strong>. You can now reference these parameters in your<br>sketches and features to build a fully parametric cabinet model. Let<br>me know if you'd like to adjust any values or add more parameters!</p>
      <span class="thumb"></span>
    </div>
    <form class="ask">
      <div class="box"><textarea aria-label="Message" placeholder="Ask Autodesk Assistant"></textarea><button type="button" aria-label="Send"><svg><use href="#send"/></svg></button></div>
      <small>Powered by AI. Mistakes are possible; please double-check responses.</small>
    </form>
  </aside>
</main>

<footer class="status"><span>Select a dimension to reference the parameter.</span><span class="n">1</span><span class="n last">1</span></footer>
<script src="app.js"></script>
</body>
</html>
```
FILE: styles.css
```css
* { box-sizing: border-box; }
html, body { height: 100%; }
body {
  margin: 0;
  display: flex;
  flex-direction: column;
  overflow: hidden;
  background: #222933;
  color: #c3c7ce;
  font: 5px/6px Roboto, "Noto Sans", sans-serif;
}
.defs { position: absolute; width: 0; height: 0; }
button, input, select, textarea { font: inherit; color: inherit; border: 0; padding: 0; margin: 0; background: none; border-radius: 0; outline: 0; }
button { display: flex; align-items: center; white-space: nowrap; }
a { color: inherit; text-decoration: none; }
h1, h2, h3, p { margin: 0; font: inherit; }
.ic { width: 6px; height: 6px; flex: none; }
.caret { width: 3px; height: 2px; flex: none; background: #9aa0ab; clip-path: polygon(0 0, 100% 0, 50% 100%); }
.sep { width: 1px; height: 8px; flex: none; background: #454d5a; }

/* title bar */
.titlebar { display: flex; align-items: center; height: 11px; flex: none; padding-bottom: 1px; background: #222933; }
.logo { width: 9px; height: 9px; background: #e6b422; color: #fff; font-weight: 700; font-size: 7px; line-height: 9px; text-align: center; }
.quick { display: flex; align-items: center; gap: 2px; padding-left: 5px; }
.quick svg, .account svg { width: 7px; height: 7px; }
.quick .sep { margin: 0 2px; }
.fxb { font: italic 700 6px/7px "Liberation Serif", serif; }
.pick { display: flex; align-items: center; width: 38px; height: 8px; margin: 0 3px; padding: 0 1px; background: #343c4a; }
.pick select { flex: 1; min-width: 0; appearance: none; line-height: 8px; color: #d0d3d9; }
.quick.after { padding-left: 2px; gap: 3px; }
.titlebar h1 { margin-left: auto; margin-right: auto; padding-left: 6px; white-space: nowrap; color: #b4b9c1; }
.titlebar h1 span { padding-left: 3px; }
.account { display: flex; align-items: center; gap: 3px; color: #9fa6b1; }
.account input { width: 71px; height: 8px; padding-left: 2px; background: #3b4353; }
.account input::placeholder { color: #b9bec7; opacity: 1; }
.account button { gap: 1px; }
.tri { font-size: 4px; }
.winbtns { display: flex; gap: 4px; padding: 0 2px 0 9px; color: #fff; }
.winbtns svg { width: 6px; height: 6px; }

/* ribbon tabs */
.menu { display: flex; align-items: stretch; height: 8px; flex: none; color: #858d99; line-height: 9px; }
.menu a { padding: 0 4px 0 3px; }
.menu .file { width: 18px; margin-right: 5px; padding: 0; background: #cf9e12; color: #fff; text-align: center; }
.menu .on { padding: 0 3px; background: #3b4353; color: #c3c7ce; }
.menu button { gap: 2px; padding-left: 8px; }
.pill { width: 6px; height: 4px; border-radius: 1px; background: #d9dce1; }

/* ribbon */
.ribbon { display: flex; height: 38px; flex: none; background: #3b4353; border-bottom: 1px solid #2a313d; }
.group { display: flex; flex-direction: column; border-right: 1px solid #2f3643; }
.tools { flex: 1; display: grid; padding-top: 2px; }
.cap { height: 7px; display: flex; align-items: center; justify-content: center; gap: 2px; color: #8e95a1; white-space: nowrap; }
.big { flex-direction: column; justify-content: flex-start; line-height: 6px; text-align: center; }
.big svg { width: 13px; height: 13px; margin-bottom: 2px; }
.big .caret { margin-top: 2px; }
.col { display: grid; grid-template-rows: repeat(3, 6px); row-gap: 4px; padding-top: 1px; justify-items: start; }
.col button { gap: 2px; }
.col svg { width: 6px; height: 6px; }
.g-sketch { width: 33px; }
.g-create { width: 123px; }
.g-create .tools { grid-template-columns: 19px 19px 27px 29px 1fr; padding-left: 1px; }
.g-modify { width: 189px; }
.g-modify .tools { grid-template-columns: 15px 15px 19px 31px 45px 37px 1fr; padding-left: 1px; }
.g-explore { width: 26px; }
.g-work { width: 51px; }
.g-work .tools { grid-template-columns: 22px 1fr; }
.g-pattern { width: 69px; }
.g-pattern .tools { grid-template-columns: 42px 1fr; padding-left: 2px; }
.g-free { width: 48px; }
.g-free .tools { grid-template-columns: 18px 1fr; }
.g-surface { width: 110px; }
.g-surface .tools { grid-template-columns: 26px 42px 1fr; padding-left: 2px; }
.g-simplify { width: 39px; }
.g-stress { width: 27px; }
.g-convert { width: 30px; }
.ribbon-gear { height: 12px; gap: 3px; padding-left: 4px; }

/* work area */
.work { flex: 1; min-height: 0; display: flex; }
.strip { display: flex; align-items: center; gap: 4px; height: 10px; flex: none; padding-right: 2px; background: #222933; }
.strip .tab { display: flex; align-items: center; gap: 3px; height: 10px; padding: 0 2px; white-space: nowrap; }
.strip .tab svg { width: 5px; height: 5px; }
.strip .on { background: #3b4453; color: #d2d5db; }
.strip .dim { color: #7f8793; }
.strip .end { margin-left: auto; }
.browser { width: 117px; flex: none; background: #3f4757; border-right: 1px solid #2c3340; color: #d0d3d9; font-family: "DejaVu Sans", sans-serif; font-size: 4px; }
.browser .strip { gap: 3px; font-family: "DejaVu Sans Condensed", "DejaVu Sans", sans-serif; }
.tree { margin: 0; padding: 0; list-style: none; }
.tree li { display: flex; align-items: center; gap: 1px; height: 8px; padding-left: 1px; }
.tree svg { width: 6px; height: 6px; }
.tree b { width: 5px; height: 5px; line-height: 5px; text-align: center; font-size: 5px; }
.tree .sub { padding-left: 7px; }
.stage { flex: 1; min-width: 0; display: flex; flex-direction: column; }
.viewport { flex: 1; min-height: 0; position: relative; background: #1b2027; }
.scene { position: absolute; inset: 0; width: 100%; height: 100%; }
.cube text { font-size: 3px; fill: #66696d; }
.triad text { font-size: 5px; }
.docbtns { position: absolute; top: 1px; right: 0; display: flex; gap: 2px; }
.navbar { position: absolute; top: 58px; right: 0; display: flex; flex-direction: column; align-items: center; justify-content: space-between; width: 13px; height: 89px; padding: 7px 0; background: #63676c; }
.navbar svg { width: 9px; height: 9px; }
.docs { display: flex; align-items: stretch; height: 9px; flex: none; padding-left: 3px; background: #222a34; }
.docs a { display: flex; align-items: center; gap: 2px; padding-right: 3px; }
.docs a svg:not(.ic) { width: 4px; height: 4px; }
.docs .on { padding: 0 3px; background: #3b4656; border-bottom: 1px solid #21a5d3; color: #dde0e5; }
.docs button { margin-left: auto; padding-right: 2px; }

/* parameters dialog */
.dialog {
  position: absolute; left: 3px; top: 1px; width: 307px;
  display: flex; flex-direction: column;
  background: #f0f0f0; border-radius: 2px; color: #111;
  font: 4px/5px "DejaVu Sans Condensed", "DejaVu Sans", sans-serif;
}
.dlg-head { display: flex; align-items: center; justify-content: space-between; height: 11px; padding: 0 4px 0 3px; background: #f6f6f6; border-radius: 2px 2px 0 0; }
.dlg-head h2 { font-size: 5px; font-family: Lato, sans-serif; }
.filter { width: 158px; height: 8px; margin: 6px 0 7px 5px; padding: 0 2px; background: #fff; border: 1px solid #e2e2e2; }
.filter::placeholder { color: #6a6a6a; opacity: 1; }
.params { width: 100%; height: 263px; table-layout: fixed; border-collapse: separate; border-spacing: 0; }
.c-row { width: 5px; } .c-tree { width: 8px; } .c-ind { width: 7px; } .c-name { width: 61px; }
.c-used { width: 24px; } .c-unit { width: 21px; } .c-eq { width: 59px; } .c-nom { width: 22px; }
.c-tol { width: 17px; } .c-mod { width: 21px; } .c-key { width: 14px; } .c-exp { width: 15px; }
.params th, .params td { padding: 0 0 0 1px; font-weight: 400; line-height: 6px; text-align: left; overflow: hidden; white-space: nowrap; }
.params thead tr { height: 12px; }
.params tbody tr { height: 7px; }
.params thead th { padding-bottom: 1px; border-right: 1px solid #e3e3e3; }
.params tbody td, .params tbody th { border-right: 1px solid #b5b5b5; border-bottom: 1px solid #b5b5b5; background: #fff; }
.params .num { font-family: "DejaVu Sans", sans-serif; }
.params tbody .edge { background: #f4f4f4; border-color: #dcdcdc; }
.params tbody .lead { background: #f0f0f0; border-color: transparent; color: #888; }
.params tbody .g, .params .group-row th, .params .group-row td:not(.edge):not(.lead) { background: #d0d0d0; border-color: #a9a9a9; }
.params .group-row th { font-family: "DejaVu Sans", sans-serif; }
.params .picked td:not(.edge):not(.lead):not(.nm) { background: #0078d7; border-color: #0078d7; color: #fff; }
.exp { display: inline-block; width: 10px; height: 9px; margin-right: 1px; vertical-align: middle; background: linear-gradient(135deg, #8fd3ea 50%, #17324d 50%); border: 1px solid #4a9cb5; }
.dot { display: inline-block; width: 6px; height: 6px; vertical-align: top; border-radius: 3px; background: #fff200; border: 1px solid #b3ab1b; }
.picked .dot { background: #0a10f0; border-color: #0a10c0; }
.params input { display: block; appearance: none; width: 5px; height: 5px; background: #fff; border: 1px solid #d8d8d8; border-top-color: #555; border-left-color: #555; }
.params .picked input { background: #111; border-color: #111; }
.dlg-foot { display: flex; align-items: flex-start; padding: 13px 6px 3px 5px; }
.dlg-foot button { justify-content: center; height: 9px; background: #fdfdfd; border: 1px solid #ebebeb; }
.dlg-foot .bare { background: none; border: 0; }
.pair, .mid { display: grid; row-gap: 3px; }
.line { display: flex; align-items: center; gap: 3px; height: 9px; }
.icons { width: 12px; }
.icons svg { width: 7px; height: 7px; }
.add { width: 40px; margin-right: 3px; }
.add button { gap: 4px; }
.dlg-foot .caret { background: #333; }
.dlg-foot .upd { width: 27px; color: #a9a9a9; }
.purge { width: 47px; }
.mid input { appearance: none; width: 5px; height: 5px; background: #0a66b5; clip-path: inset(0 round 1px); }
.mid .line { gap: 2px; }
.xml { width: 48px; margin: 0 10px; }
.xml button { gap: 4px; }
.xml svg { width: 6px; height: 6px; }
.tol { margin: 2px auto 0 0; padding: 0; border: 0; min-width: 0; }
.tol legend { padding: 0; }
.tol .line { gap: 2px; height: 11px; }
.tol button { width: 10px; height: 10px; border: 0; }
.tol svg { width: 9px; height: 9px; }
.ok { width: 30px; padding-top: 1px; row-gap: 2px; }
.dlg-foot .done { border-color: #7fb6df; }
.hint { position: absolute; left: 134px; top: 122px; padding: 0 1px; background: rgba(255, 255, 255, .92); color: #8c8c8c; line-height: 6px; font-family: "DejaVu Sans", sans-serif; }
.cursor { position: absolute; left: 132px; top: 113px; width: 8px; height: 11px; }

/* assistant */
.assistant { width: 173px; flex: none; display: flex; flex-direction: column; background: #1c2137; font-family: Lato, "Noto Sans", sans-serif; border-left: 1px solid #20262f; }
.assistant .strip { font: 4px/6px "DejaVu Sans Condensed", "DejaVu Sans", sans-serif; gap: 3px; }
.a-head { display: flex; align-items: flex-end; height: 22px; flex: none; padding: 0 6px; background: linear-gradient(#333d50, #2b3550); }
.a-head button { width: 15px; height: 15px; justify-content: center; }
.a-head .on { background: #1c2137; border-radius: 2px 2px 0 0; }
.a-head svg { width: 7px; height: 7px; }
.a-head .preview { width: 41px; height: 9px; margin: 0 3px 3px auto; gap: 1px; background: #3a1458; border: 1px solid #4d2770; border-radius: 1px; color: #fff; font: 600 5px/6px "Noto Sans", sans-serif; }
.a-head .preview svg { width: 5px; height: 5px; }
.a-head .add { width: 8px; margin: 0; }
.a-body { position: relative; flex: 1; min-height: 0; overflow: hidden; padding: 0 10px 0 6px; line-height: 6px; color: #c8ccd6; }
.spec { width: 100%; table-layout: fixed; border-collapse: collapse; border: 1px solid #2a3248; }
.spec.first { margin-top: -5px; }
.spec tr { height: 22px; }
.spec thead tr { height: 13px; background: #273042; }
.spec .short { height: 20px; }
.spec th, .spec td { padding: 0 4px; border: 1px solid #2a3248; text-align: left; font-weight: 400; white-space: nowrap; width: 24px; }
.spec.first td { width: 28px; }
.spec th { color: #e2e4ea; font-weight: 700; }
.spec th:first-child, .spec td:first-child, .spec.first td:first-child { width: 57px; }
.spec.wide th:first-child, .spec.wide td:first-child { width: 62px; }
.spec th:last-child, .spec td:last-child, .spec.first td:last-child { width: auto; }
.spec code { display: block; padding: 0 1px; border: 1px solid #262c42; background: #1a1e31; color: #dcdfe7; font: 700 4px/6px "DejaVu Sans Mono", monospace; }
.a-body hr { height: 1px; margin: 19px 0 5px; border: 0; background: #626878; }
.a-body h3 { display: flex; align-items: center; gap: 2px; height: 6px; margin-bottom: 6px; color: #eceef2; font: 700 5px/6px "Noto Sans", sans-serif; }
.a-body h3 svg { width: 5px; height: 5px; margin-left: 1px; }
.a-body p { padding-top: 2px; white-space: nowrap; }
.a-body strong { color: #eef0f4; }
.thumb { position: absolute; right: 1px; bottom: 0; width: 2px; height: 120px; background: #3d485e; }
.ask { flex: none; margin: 0; padding: 8px 6px 6px; display: grid; row-gap: 4px; text-align: center; }
.ask .box { display: flex; align-items: flex-end; height: 23px; padding: 5px 3px 3px 4px; background: #2c344a; border-radius: 1px; }
.ask textarea { flex: 1; height: 100%; resize: none; overflow: hidden; }
.ask textarea::placeholder { color: #6c7488; opacity: 1; }
.ask svg { width: 7px; height: 7px; }
.ask small { font-size: 5px; line-height: 6px; color: #9ba1af; }

/* status bar */
.status { display: flex; align-items: center; height: 10px; flex: none; background: #303644; color: #b9bdc5; font-family: Lato, sans-serif; }
.status .n { width: 12px; text-align: center; }
.status .n:nth-child(2) { margin-left: auto; }
.status .last { width: 9px; border-left: 1px solid #555d6b; }
```
FILE: app.js
```js
const model = [
  ["d3", "Sketch4", "in", "Cabinet_Height", "34.5000..."],
  ["d4", "Sketch4", "in", "Cabinet_Width", "24.0000..."],
  ["d5", "Extrusion1", "in", "Cabinet_Depth", "24.0000..."],
  ["d6", "Extrusion1", "deg", "0.00 deg", "0.000000"],
  ["d7", "Shell1", "in", "Panel_Thickness", "0.750000"]
];
const user = [
  ["Cabinet_Width", "d4", "in", "24 in", "24.0000..."],
  ["Cabinet_Height", "d3", "in", "34.50000000 in", "34.5000..."],
  ["Cabinet_Depth", "d5", "in", "24.00000000 in", "24.0000..."],
  ["Panel_Thickness", "d7", "in", "0.75000000 in", "0.750000"],
  ["Back_Panel_Thickness", "", "in", "0.25000000 in", "0.250000"],
  ["Toe_Kick_Height", "", "in", "3.50000000 in", "3.500000"],
  ["Toe_Kick_Depth", "", "in", "3.00000000 in", "3.000000"],
  ["Door_Gap", "", "in", "0.06250000 in", "0.062500"],
  ["Door_Overlay", "", "in", "0.62500000 in", "0.625000"],
  ["Door_Thickness", "", "in", "0.75000000 in", "0.750000"],
  ["Shelf_Thickness", "", "in", "0.75000000 in", "0.750000"],
  ["Shelf_Setback", "", "in", "1.00000000 in", "1.000000"],
  ["Shelf_Count", "", "ul", "2.00000000 ul", "2.000000"],
  ["Drawer_Height", "", "in", "6.00000000 in", "6.000000"],
  ["Drawer_Gap", "", "in", "0.06250000 in", "0.062500"],
  ["Drawer_Side_Thickness", "", "in", "0.50000000 in", "0.500000"],
  ["Drawer_Bottom_Thickness", "", "in", "0.25000000 in", "0.250000"],
  ["Drawer_Slide_Clearance", "", "in", "0.50000000 in", "0.500000"],
  ["Face_Frame_Width", "", "in", "1.50000000 in", "1.500000"],
  ["Face_Frame_Thickness", "", "in", "0.75000000 in", "0.750000"],
  ["Handle_Hole_Spacing", "", "in", "3.75000000 in", "3.750000"],
  ["Handle_Offset_From_Edge", "", "in", "2.00000000 in", "2.000000"],
  ["Hinge_Offset_From_Edge", "", "in", "3.00000000 in", "3.000000"],
  ["Countertop_Thickness", "", "in", "1.50000000 in", "1.500000"],
  ["Countertop_Overhang_Front", "", "in", "1.00000000 in", "1.000000"],
  ["Countertop_Overhang_Side", "", "in", "1.00000000 in", "1.000000"]
];

const heading = (title) =>
  `<tr class="group-row"><td class="edge"></td><td class="lead">⊟</td><th colspan="2" scope="rowgroup">${title}</th>${"<td></td>".repeat(9)}</tr>`;

const line = (r, isModel, picked) => {
  const g = isModel ? "g" : "";
  return `<tr class="${picked ? "picked" : ""}"><td class="edge">${picked ? "▸" : ""}</td><td class="lead"></td><td class="lead">–</td>
  <td class="nm ${g}">${r[0]}</td><td class="g">${r[1]}</td><td class="${g}">${r[2]}</td><td class="num">${r[3]}</td>
  <td class="g num">${r[4]}</td><td class="${isModel ? "" : "g"}"><span class="dot"></span>${isModel ? "&lt;De" : ""}</td><td class="g num">${r[4]}</td>
  <td><input type="checkbox" aria-label="Key ${r[0]}"></td><td><input type="checkbox" aria-label="Export ${r[0]}"></td><td></td></tr>`;
};

document.getElementById("rows").innerHTML =
  heading("Model Parameters") + model.map((r) => line(r, true, false)).join("") +
  heading("User Parameters") + user.map((r, i) => line(r, false, i === 0)).join("");
```
